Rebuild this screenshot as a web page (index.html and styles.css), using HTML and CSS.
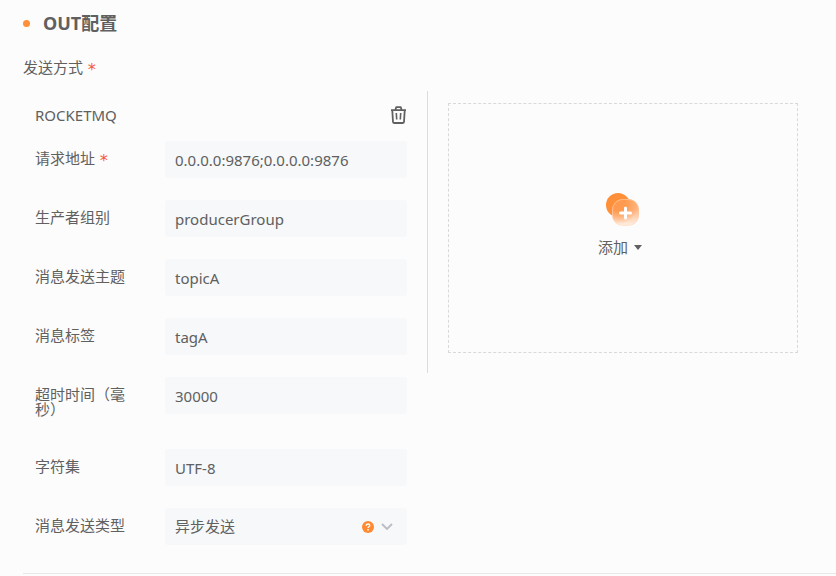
FILE: index.html
```html
<!DOCTYPE html>
<html lang="zh-CN">

<head>
    <meta charset="utf-8">
    <title>OUT配置</title>
    <link rel="stylesheet" href="styles.css">
</head>

<body>
    <form class="out-config">
        <h2 class="title">OUT配置</h2>
        <div class="send-label">发送方式 <span class="required">*</span></div>

        <div class="panels">
            <div class="mq-panel">
                <div class="mq-head">
                    <span>ROCKETMQ</span>
                    <button type="button" class="icon-btn" aria-label="删除">
                        <svg width="16" height="18" viewBox="0 0 16 18" fill="none" stroke="#606060" stroke-width="1.800" stroke-linejoin="round">
                            <path d="M0 4.200h15M4.500 3.500l.7-2.300h4.600l.7 2.300M1.300 4.500l.7 11.500q.1 1 1 1h9q.9 0 1-1l.7-11.500" />
                            <path d="M5.300 7l.4 6.500M9.700 7l-.4 6.500" stroke-width="1.600" />
                        </svg>
                    </button>
                </div>
                <div class="row">
                    <label for="address">请求地址 <span class="required">*</span></label>
                    <input id="address" class="field" type="text" value="0.0.0.0:9876;0.0.0.0:9876">
                </div>
                <div class="row">
                    <label for="group">生产者组别</label>
                    <input id="group" class="field" type="text" value="producerGroup">
                </div>
                <div class="row">
                    <label for="topic">消息发送主题</label>
                    <input id="topic" class="field" type="text" value="topicA">
                </div>
                <div class="row">
                    <label for="tag">消息标签</label>
                    <input id="tag" class="field" type="text" value="tagA">
                </div>
                <div class="row">
                    <label for="timeout">超时时间（毫秒）</label>
                    <input id="timeout" class="field" type="text" value="30000">
                </div>
                <div class="row">
                    <label for="charset">字符集</label>
                    <input id="charset" class="field" type="text" value="UTF-8">
                </div>
                <div class="row">
                    <label for="type">消息发送类型</label>
                    <div class="select-box">
                        <select id="type" class="field">
                            <option>异步发送</option>
                        </select>
                        <div class="select-icons">
                            <svg width="12" height="12" viewBox="0 0 12 12" fill="none">
                                <circle cx="6" cy="6" r="6" fill="#ff8a32" />
                                <path d="M4.200 4.700q0-1.700 1.800-1.700t1.800 1.500q0 .8-.9 1.300t-.9 1.300" stroke="#fff" stroke-width="1.300" />
                                <path d="M6 8v1.400" stroke="#fff" stroke-width="1.400" />
                            </svg>
                            <svg width="12" height="8" viewBox="0 0 12 8" fill="none" stroke="#b9bcc2" stroke-width="1.800">
                                <path d="M1 1l5 5 5-5" />
                            </svg>
                        </div>
                    </div>
                </div>
            </div>

            <div class="add-panel">
                <button type="button" class="add-box">
                    <svg width="36" height="36" viewBox="0 0 36 36">
                        <defs>
                            <linearGradient id="glass" x1="0" y1="0" x2="0" y2="1">
                                <stop offset="0" stop-color="#ffb47a" />
                                <stop offset="0.4" stop-color="#ffb888" />
                                <stop offset="1" stop-color="#fff2e8" />
                            </linearGradient>
                            <radialGradient id="overlap" gradientUnits="userSpaceOnUse" cx="14" cy="12" r="20">
                                <stop offset="0.3" stop-color="#ff9a4e" />
                                <stop offset="1" stop-color="#ff9a4e" stop-opacity="0" />
                            </radialGradient>
                        </defs>
                        <circle cx="13" cy="13" r="12" fill="#ff8f38" />
                        <rect x="7" y="7" width="27" height="27" rx="11" fill="url(#glass)" />
                        <rect x="7.500" y="7.500" width="26" height="26" rx="10.500" fill="url(#overlap)" stroke="#ffd3b0" stroke-opacity="0.400" />
                        <path d="M20.500 16v10M15.500 21h10" stroke="#fff" stroke-width="3" stroke-linecap="round" />
                    </svg>
                    <span class="add-text">添加 <i class="caret"></i></span>
                </button>
            </div>
        </div>
    </form>
</body>

</html>
```
FILE: styles.css
```css
* {
    box-sizing: border-box;
}

body {
    margin: 0;
    background-color: #fcfcfc;
    color: #606060;
    font-family: "Noto Sans", "Noto Sans CJK SC", sans-serif;
    font-size: 15px;
    line-height: 15px;
}

.out-config {
    margin-left: 23px;
    padding-top: 12px;
    border-bottom: 1px solid #e8e8e8;
}

.title {
    display: flex;
    align-items: center;
    gap: 13px;
    margin: 0;
    font-size: 18px;
    line-height: 22px;
}

.title::before {
    content: "";
    width: 7px;
    height: 7px;
    border-radius: 50%;
    background-color: #ff8f38;
}

.send-label {
    margin-top: 26px;
}

.required {
    color: #f5573b;
    font-family: "DejaVu Sans Mono", monospace;
    font-size: 16px;
    vertical-align: -2px;
    line-height: 1px;
}

.panels {
    display: flex;
    align-items: flex-start;
    margin-top: 16px;
}

.mq-panel {
    width: 404px;
    padding: 15px 20px 28px 12px;
}

.mq-head {
    display: flex;
    justify-content: space-between;
    align-items: center;
    height: 18px;
    margin-bottom: 17px;
}

.icon-btn {
    display: flex;
    padding: 0;
    border: none;
    background: none;
    cursor: pointer;
}

.row {
    display: grid;
    grid-template-columns: 100px 1fr;
    column-gap: 30px;
    align-items: start;
}

.row + .row {
    margin-top: 22px;
}

.row label {
    padding: 10px 0;
}

.field {
    width: 100%;
    height: 37px;
    padding: 0 10px;
    border: none;
    border-radius: 3px;
    outline: none;
    background-color: #f6f8fa;
    color: #606060;
    font: inherit;
    appearance: none;
}

.select-box {
    position: relative;
}

.select-icons {
    position: absolute;
    top: 0;
    right: 14px;
    display: flex;
    align-items: center;
    gap: 7px;
    height: 37px;
    pointer-events: none;
}

.add-panel {
    padding: 12px 0 20px 20px;
    border-left: 1px solid #dcdcdc;
}

.add-box {
    display: flex;
    flex-direction: column;
    align-items: center;
    justify-content: center;
    gap: 12px;
    width: 350px;
    height: 250px;
    padding: 0 0 10px;
    border: 1px dashed #d9d9d9;
    background: none;
    color: #606060;
    font: inherit;
    cursor: pointer;
}

.add-text {
    display: flex;
    align-items: center;
    gap: 6px;
    margin-right: 6px;
}

.caret {
    border: 4px solid transparent;
    border-top: 5px solid #606060;
    border-bottom: none;
}
```
